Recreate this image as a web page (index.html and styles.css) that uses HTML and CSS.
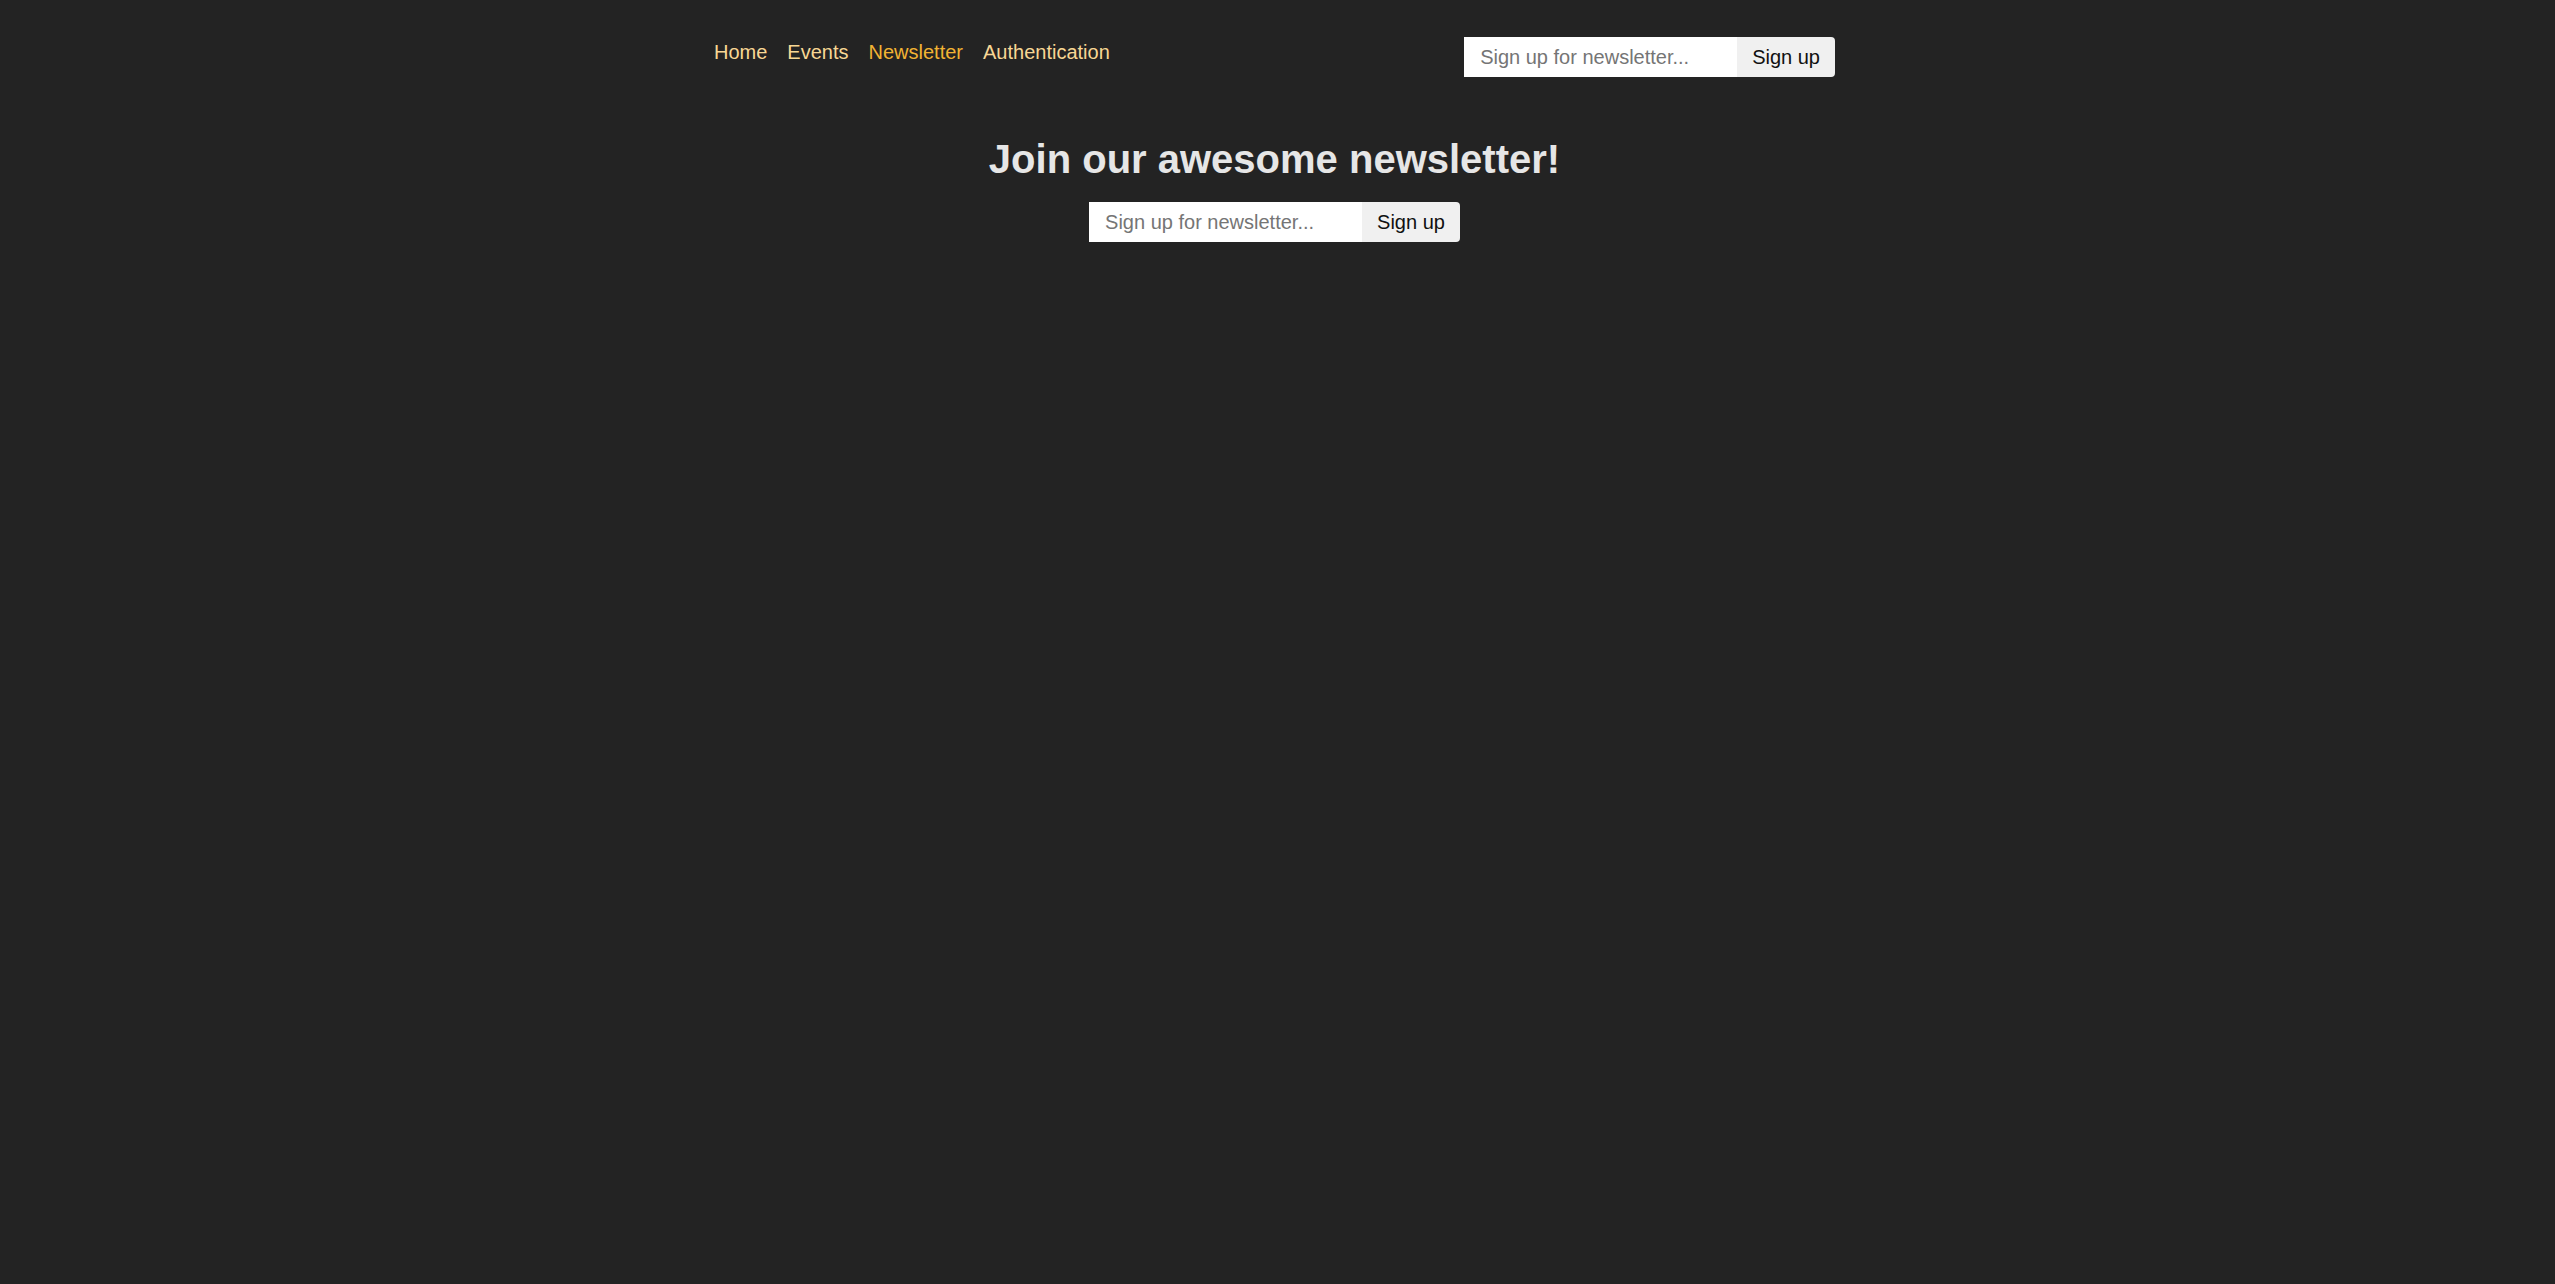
FILE: index.html
```html
<!DOCTYPE html>
<html lang="en">
<head>
<meta charset="utf-8">
<title>Newsletter</title>
<link rel="stylesheet" href="styles.css">
</head>
<body>
<header class="header">
  <nav>
    <ul class="list">
      <li><a href="#">Home</a></li>
      <li><a href="#">Events</a></li>
      <li><a href="#" class="active">Newsletter</a></li>
      <li><a href="#">Authentication</a></li>
    </ul>
  </nav>
  <form class="newsletter">
    <input type="email" placeholder="Sign up for newsletter..." aria-label="Sign up for newsletter">
    <button type="button">Sign up</button>
  </form>
</header>
<main class="content">
  <h1 class="title">Join our awesome newsletter!</h1>
  <form class="newsletter">
    <input type="email" placeholder="Sign up for newsletter..." aria-label="Sign up for newsletter">
    <button type="button">Sign up</button>
  </form>
</main>
</body>
</html>
```
FILE: styles.css
```css
html, body {
  height: 100%;
}

body {
  margin: 0;
  padding: 0 6px 0 0;
  background-color: #232323;
  color: #e6e6e6;
  font-family: "Liberation Sans", Arial, sans-serif;
  font-size: 20px;
}

.header {
  width: 1121px;
  margin: 0 auto;
  padding-top: 37px;
  display: flex;
  justify-content: space-between;
  align-items: flex-start;
}

.list {
  list-style: none;
  margin: 4px 0 0 0;
  padding: 0;
  display: flex;
  gap: 20px;
}

.list a {
  text-decoration: none;
  color: #f8d794;
}

.list a.active {
  color: #f2b333;
}

.newsletter {
  display: flex;
  margin: 0;
}

.newsletter input {
  box-sizing: border-box;
  width: 273px;
  height: 40px;
  padding: 8px 16px;
  border: none;
  border-radius: 0;
  background: #ffffff;
  color: #222222;
  font: inherit;
  outline: none;
}

.newsletter input::placeholder {
  color: #757575;
}

.newsletter button {
  box-sizing: border-box;
  height: 40px;
  padding: 8px 15px;
  border: none;
  border-radius: 0 4px 4px 0;
  background: #f0f0f0;
  color: #111111;
  font: inherit;
  cursor: pointer;
}

.content {
  display: flex;
  flex-direction: column;
  align-items: center;
}

.title {
  margin: 60px 0 20px;
  font-size: 40px;
  font-weight: bold;
  line-height: normal;
  color: #e6e6e6;
}
```
